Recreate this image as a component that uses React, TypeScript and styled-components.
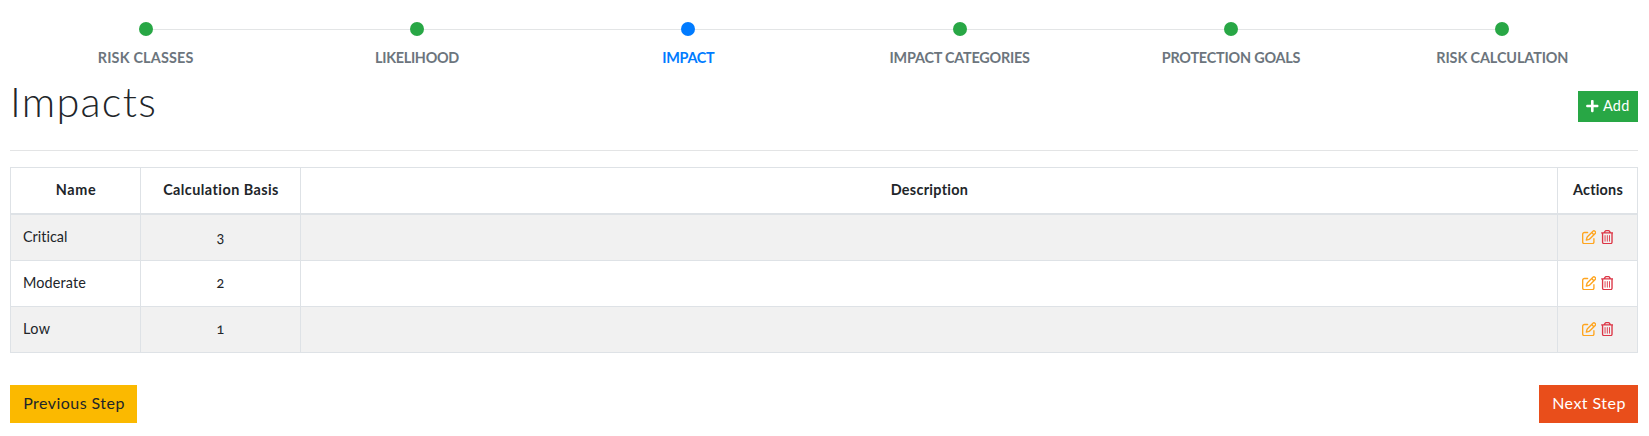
import React from "react";
import styled, { createGlobalStyle } from "styled-components";
import { FaPlus } from "react-icons/fa";
import { FaRegPenToSquare, FaRegTrashCan } from "react-icons/fa6";

const GlobalStyle = createGlobalStyle`
  *, *::before, *::after { box-sizing: border-box; }
  body {
    margin: 0;
    background: #fff;
    color: #212529;
    font-family: Lato, "Open Sans", sans-serif;
    font-size: 14.4px;
    line-height: 1.5;
    font-feature-settings: "onum";
    font-variant-ligatures: none;
  }
`;

const Page = styled.main`
  display: flex;
  flex-direction: column;
  padding: 22px 11px 12px 10px;
`;

const Stepper = styled.ol`
  display: grid;
  grid-template-columns: repeat(6, 1fr);
  margin: 0;
  padding: 0;
  list-style: none;
`;

const Step = styled.li<{ $active?: boolean }>`
  display: flex;
  flex-direction: column;
  align-items: center;
  color: ${(p) => (p.$active ? "#007bff" : "#6c757d")};
`;

const Track = styled.div`
  display: flex;
  align-items: center;
  width: 100%;
  height: 14px;
`;

const Line = styled.span<{ $hidden?: boolean }>`
  flex: 1;
  height: 1px;
  margin-top: 1px;
  background: ${(p) => (p.$hidden ? "transparent" : "#e3e5e6")};
`;

const Dot = styled.span<{ $active?: boolean }>`
  width: 14px;
  height: 14px;
  border-radius: 50%;
  background: ${(p) => (p.$active ? "#007bff" : "#28a745")};
`;

const StepLabel = styled.span<{ $track: number }>`
  margin-top: 11px;
  line-height: 22px;
  font-weight: 700;
  letter-spacing: ${(p) => p.$track}px;
  white-space: nowrap;
`;

const Header = styled.header`
  display: flex;
  justify-content: space-between;
  align-items: flex-start;
  height: 82px;
  border-bottom: 1px solid #e3e4e5;
`;

const Title = styled.h1`
  margin: 8px 0 0;
  font-size: 41.5px;
  font-weight: 300;
  line-height: 48px;
  letter-spacing: 1.25px;
`;

const AddButton = styled.button`
  display: flex;
  align-items: center;
  justify-content: center;
  gap: 4px;
  width: 60px;
  height: 31px;
  margin-top: 22px;
  padding: 0 0 2px;
  border: 0;
  background: #28a745;
  color: #fff;
  font: inherit;
  letter-spacing: 0.3px;

  svg { width: 12.6px; height: 14px; }
`;

const Table = styled.table`
  width: 100%;
  margin-top: 16px;
  table-layout: fixed;
  border-collapse: separate;
  border-spacing: 0;
  border: solid #dee2e6;
  border-width: 1px 0 0 1px;
`;

const Col = styled.col<{ $width?: number }>`
  width: ${(p) => (p.$width ? `${p.$width}px` : "auto")};
`;

const HeadCell = styled.th<{ $track: number }>`
  height: 47px;
  padding: 0 0 2px 1px;
  border: solid #dee2e6;
  border-width: 0 1px 2px 0;
  font-weight: 700;
  letter-spacing: ${(p) => p.$track}px;
`;

const Row = styled.tr`
  &:nth-child(odd) { background: #f1f1f1; }
`;

const Cell = styled.td<{ $center?: boolean; $track?: number }>`
  height: 46px;
  padding: 0 12px 2px;
  border: solid #dee2e6;
  border-width: 0 1px 1px 0;
  text-align: ${(p) => (p.$center ? "center" : "left")};
  letter-spacing: ${(p) => p.$track ?? 0}px;
`;

const Actions = styled.div`
  display: flex;
  align-items: center;
  justify-content: center;
  gap: 5px;
  padding-top: 1px;
`;

const EditIcon = styled(FaRegPenToSquare)`
  width: 14.4px;
  height: 14.4px;
  color: #ffa51f;
`;

const DeleteIcon = styled(FaRegTrashCan)`
  width: 12.6px;
  height: 14.4px;
  color: #dc3545;
`;

const Footer = styled.footer`
  display: flex;
  justify-content: space-between;
  margin-top: 32px;
`;

const NavButton = styled.button<{ $next?: boolean }>`
  width: ${(p) => (p.$next ? 99 : 127)}px;
  height: 38px;
  padding: 0 0 2px 1px;
  border: 0;
  background: ${(p) => (p.$next ? "#e94e1b" : "#fbb900")};
  color: ${(p) => (p.$next ? "#fff" : "#212529")};
  font: inherit;
  font-size: 16px;
  letter-spacing: 0.45px;
`;

const steps = [
  { label: "RISK CLASSES", track: 0.18 },
  { label: "LIKELIHOOD", track: -0.3 },
  { label: "IMPACT", track: -0.3 },
  { label: "IMPACT CATEGORIES", track: -0.22 },
  { label: "PROTECTION GOALS", track: -0.2 },
  { label: "RISK CALCULATION", track: -0.1 },
];

const activeStep = 2;

const columns = [
  { title: "Name", width: 130, track: 0.7 },
  { title: "Calculation Basis", width: 160, track: 0.45 },
  { title: "Description", track: 0.3 },
  { title: "Actions", width: 80, track: 0.2 },
];

const impacts = [
  { name: "Critical", basis: 3, track: 0.02 },
  { name: "Moderate", basis: 2, track: 0.15 },
  { name: "Low", basis: 1, track: 0.4 },
];

export default function App() {
  return (
    <>
      <GlobalStyle />
      <Page>
        <Stepper>
          {steps.map((s, i) => (
            <Step key={s.label} $active={i === activeStep}>
              <Track>
                <Line $hidden={i === 0} />
                <Dot $active={i === activeStep} />
                <Line $hidden={i === steps.length - 1} />
              </Track>
              <StepLabel $track={s.track}>{s.label}</StepLabel>
            </Step>
          ))}
        </Stepper>
        <Header>
          <Title>Impacts</Title>
          <AddButton>
            <FaPlus />
            Add
          </AddButton>
        </Header>
        <Table>
          <colgroup>
            {columns.map((c) => (
              <Col key={c.title} $width={c.width} />
            ))}
          </colgroup>
          <thead>
            <tr>
              {columns.map((c) => (
                <HeadCell key={c.title} $track={c.track}>
                  {c.title}
                </HeadCell>
              ))}
            </tr>
          </thead>
          <tbody>
            {impacts.map((r) => (
              <Row key={r.name}>
                <Cell $track={r.track}>{r.name}</Cell>
                <Cell $center>{r.basis}</Cell>
                <Cell />
                <Cell>
                  <Actions>
                    <EditIcon />
                    <DeleteIcon />
                  </Actions>
                </Cell>
              </Row>
            ))}
          </tbody>
        </Table>
        <Footer>
          <NavButton>Previous Step</NavButton>
          <NavButton $next>Next Step</NavButton>
        </Footer>
      </Page>
    </>
  );
}
